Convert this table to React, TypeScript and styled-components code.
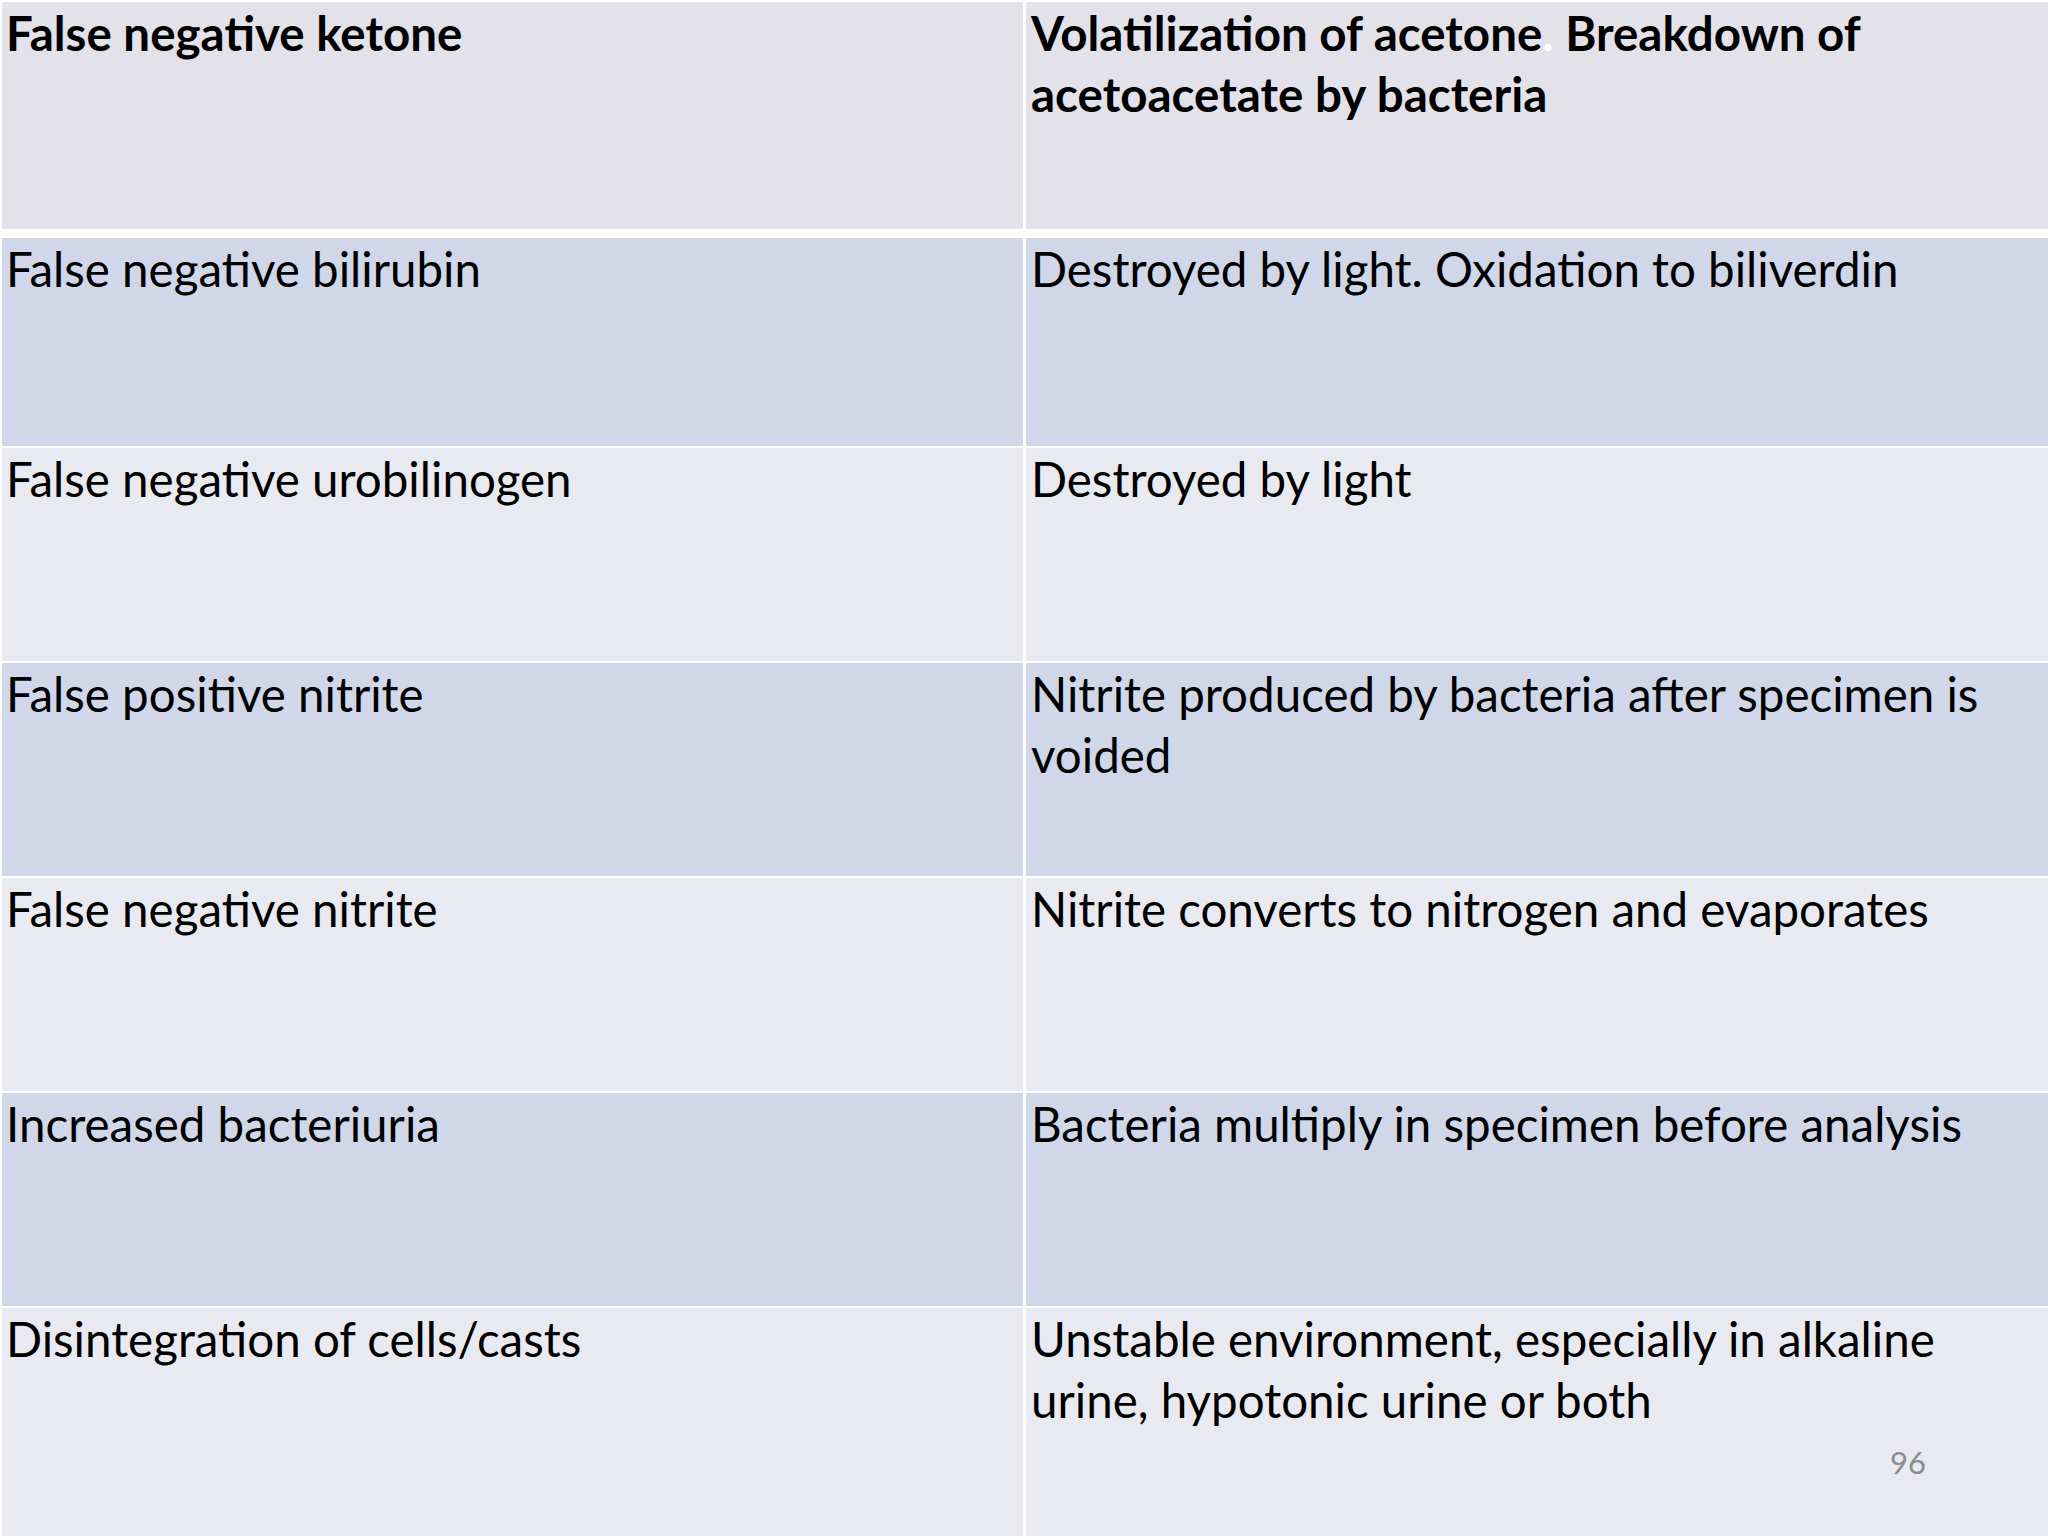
import React from "react";
import styled, { createGlobalStyle } from "styled-components";

const GlobalStyle = createGlobalStyle`
  html, body {
    margin: 0;
    padding: 0;
    background: #ffffff;
  }
  body {
    font-family: Lato, "Open Sans", "Liberation Sans", sans-serif;
  }
`;

type Tone = "head" | "blue" | "light";

const toneColor: Record<Tone, string> = {
  head: "#e3e1ea",
  blue: "#cfd7e8",
  light: "#e9eaf1",
};

const rows: { tone: Tone; left: string; right: React.ReactNode }[] = [
  {
    tone: "blue",
    left: "False negative bilirubin",
    right: "Destroyed by light. Oxidation to biliverdin",
  },
  {
    tone: "light",
    left: "False negative urobilinogen",
    right: "Destroyed by light",
  },
  {
    tone: "blue",
    left: "False positive nitrite",
    right: (
      <>
        Nitrite produced by bacteria after specimen is
        <br />
        voided
      </>
    ),
  },
  {
    tone: "light",
    left: "False negative nitrite",
    right: "Nitrite converts to nitrogen and evaporates",
  },
  {
    tone: "blue",
    left: "Increased bacteriuria",
    right: "Bacteria multiply in specimen before analysis",
  },
  {
    tone: "light",
    left: "Disintegration of cells/casts",
    right: (
      <>
        Unstable environment, especially in alkaline
        <br />
        urine, hypotonic urine or both
      </>
    ),
  },
];

export default function App() {
  return (
    <>
      <GlobalStyle />
      <Slide>
        <Table>
          <Cell $tone="head" $bold>
            False negative ketone
          </Cell>
          <Cell $tone="head" $bold $right>
            Volatilization of acetone<Faint>.</Faint> Breakdown of
            <br />
            acetoacetate by bacteria
          </Cell>
          <HeaderRule />
          {rows.map((row) => (
            <React.Fragment key={row.left}>
              <Cell $tone={row.tone}>{row.left}</Cell>
              <Cell $tone={row.tone} $right>
                {row.right}
              </Cell>
            </React.Fragment>
          ))}
        </Table>
        <PageNumber>96</PageNumber>
      </Slide>
    </>
  );
}

const Slide = styled.div`
  position: relative;
  width: 2048px;
  height: 1536px;
  overflow: hidden;
  background: #ffffff;
`;

const Table = styled.div`
  display: grid;
  grid-template-columns: 1021px 1fr;
  grid-template-rows: 227px 5px 208px repeat(4, 213px) 1fr;
  column-gap: 3px;
  row-gap: 2px;
  height: 100%;
  padding: 2px 0 0 2px;
  box-sizing: border-box;
`;

const HeaderRule = styled.div`
  grid-column: 1 / 3;
`;

const Cell = styled.div<{ $tone: Tone; $bold?: boolean; $right?: boolean }>`
  background: ${(p) => toneColor[p.$tone]};
  color: #000000;
  font-size: 47.5px;
  line-height: 61px;
  font-weight: ${(p) => (p.$bold ? 700 : 400)};
  padding: 0 0 0 ${(p) => (p.$right ? "5px" : "4px")};
  white-space: nowrap;
`;

const Faint = styled.span`
  color: #ffffff;
`;

const PageNumber = styled.div`
  position: absolute;
  right: 122px;
  top: 1443px;
  font-size: 31px;
  color: #8c8c8c;
`;
